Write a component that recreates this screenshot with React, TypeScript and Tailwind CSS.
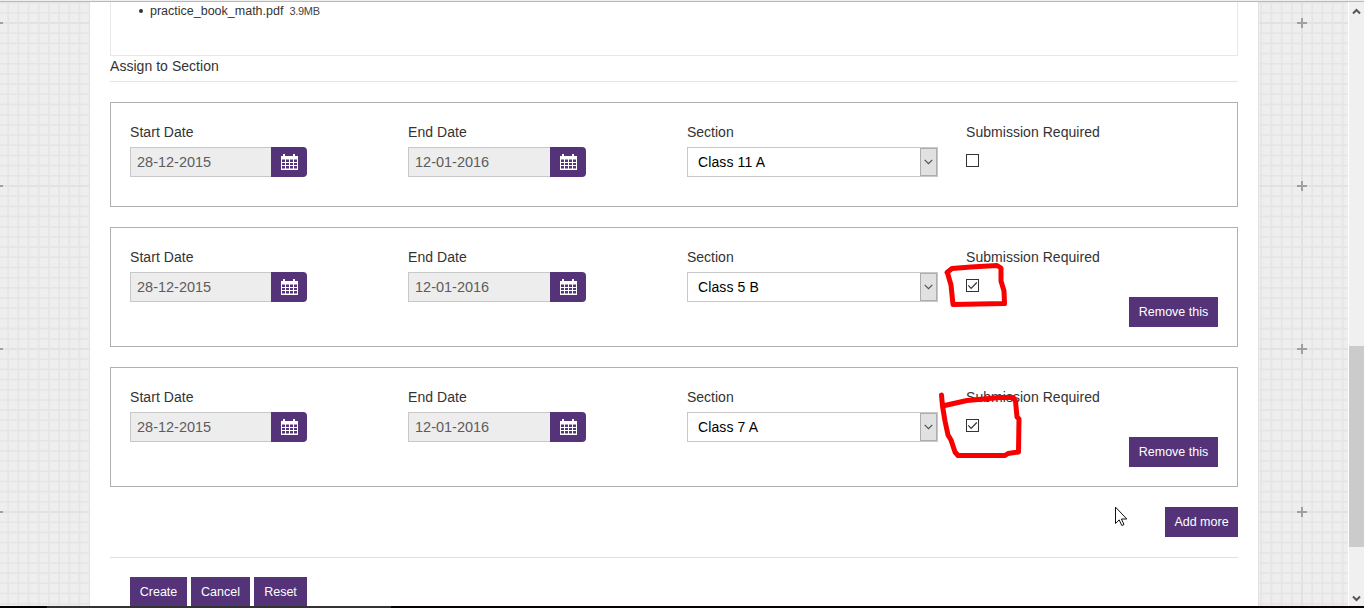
import React from "react";

const period = 163;
const step = period / 16;

function GridBackground() {
  return (
    <svg className="absolute inset-0 h-[608px] w-[1364px]" aria-hidden="true">
      <defs>
        <pattern id="grid" x="-84" y="-59" width={period} height={period} patternUnits="userSpaceOnUse">
          <rect width={period} height={period} fill="#eeeeee" />
          {Array.from({ length: 17 }, (_, i) => {
            const p = 82 + (i - 8) * step;
            const c = i === 8 ? "#dfdfdf" : "#e5e5e5";
            return (
              <g key={i} stroke={c} strokeWidth="1.6">
                <path d={`M${p} 0V163`} />
                <path d={`M0 ${p}H163`} />
              </g>
            );
          })}
          <path d="M77 82h10M82 77v10" stroke="#a0a0a0" strokeWidth="2" />
        </pattern>
      </defs>
      <rect width="1364" height="608" fill="url(#grid)" />
    </svg>
  );
}

function CalendarIcon() {
  return (
    <svg width="17" height="16" viewBox="0 0 17 16" className="block" aria-hidden="true">
      <path d="M2 0h2v2h8V0h2v2h3v3H0V2h2z" fill="#fff" />
      <path
        fillRule="evenodd"
        d="M0 4h17v12H0zM1 5.500v2.500h3V5.500zM5 5.500v2.500h3V5.500zM9 5.500v2.500h3V5.500zM13 5.500v2.500h3V5.500zM1 9v2h3V9zM5 9v2h3V9zM9 9v2h3V9zM13 9v2h3V9zM1 12v2.500h3V12zM5 12v2.500h3V12zM9 12v2.500h3V12zM13 12v2.500h3V12z"
        fill="#fff"
      />
    </svg>
  );
}

function DateField({ label, value, width, inputWidth }: { label: string; value: string; width: string; inputWidth: string }) {
  return (
    <div className={width}>
      <div className="h-5 text-sm leading-5 tracking-[0.06px]">{label}</div>
      <div className="mt-[5px] flex h-[30px]">
        <div
          className={`h-[30px] border border-r-0 border-[#c8c8c8] bg-[#ededed] pl-1.5 text-[14.5px] leading-[28px] text-[#5c5c5c] ${inputWidth}`}
        >
          {value}
        </div>
        <button className="flex h-[30px] w-9 items-center rounded-r-[4px] bg-[#543378] pl-2.5">
          <CalendarIcon />
        </button>
      </div>
    </div>
  );
}

function SectionSelect({ value }: { value: string }) {
  return (
    <div className="w-[279px]">
      <div className="h-5 text-sm leading-5">Section</div>
      <div className="mt-[5px] flex h-[30px] w-[251px] justify-between border border-[#c8c8c8] bg-white">
        <span className="pl-2.5 text-sm leading-[28px] tracking-[0.12px] text-black">{value}</span>
        <span className="flex h-[28px] w-[17px] items-center justify-center border border-[#adadad] bg-[#e1e1e1]">
          <svg width="9" height="6" viewBox="0 0 9 6" fill="none" stroke="#505050" strokeWidth="1.2">
            <path d="M.7.8 4.5 4.6 8.3.8" />
          </svg>
        </span>
      </div>
    </div>
  );
}

function Checkbox({ checked }: { checked: boolean }) {
  return (
    <span className="mt-3 block h-[13px] w-[13px] border border-[#333] bg-white">
      {checked && (
        <svg width="11" height="11" viewBox="0 0 11 11" fill="none" stroke="#333" strokeWidth="1.2">
          <path d="M1.3 5.4 4.1 8.3 9.8 2.5" />
        </svg>
      )}
    </span>
  );
}

function Btn({ children, size }: { children: React.ReactNode; size: string }) {
  return (
    <button className={`h-[30px] bg-[#543378] text-center text-[12.5px] leading-[30px] whitespace-nowrap text-white ${size}`}>
      {children}
    </button>
  );
}

function AssignCard({ section, checked, removable }: { section: string; checked: boolean; removable: boolean }) {
  return (
    <div
      className={`mb-5 flex flex-col border border-[#b0b0b0] px-[19px] pt-[19px] ${removable ? "h-[120px]" : "h-[105px]"}`}
    >
      <div className="flex h-[50px]">
        <DateField label="Start Date" value="28-12-2015" width="w-[278px]" inputWidth="w-[141px]" />
        <DateField label="End Date" value="12-01-2016" width="w-[279px]" inputWidth="w-[142px]" />
        <SectionSelect value={section} />
        <div>
          <div className="h-5 text-sm leading-5 tracking-[0.04px]">Submission Required</div>
          <Checkbox checked={checked} />
        </div>
      </div>
      {removable && (
        <div className="flex justify-end">
          <Btn size="w-[89px]">Remove this</Btn>
        </div>
      )}
    </div>
  );
}

function Annotations() {
  return (
    <svg
      className="pointer-events-none absolute inset-0 h-[608px] w-[1364px]"
      fill="none"
      stroke="#f80000"
      strokeLinecap="round"
      strokeLinejoin="round"
      aria-hidden="true"
    >
      <path strokeWidth="5" d="M947 272.5 952 268.500 971 267 997 265.500 1001 268 1001 281 1004 291 1004.500 303.500 953 304.500 951 285 947.500 273" />
      <path strokeWidth="5" d="M941.500 395 942.500 406 967 400.500 1000 397.500 1013 397.500 1015.500 401 1017 417 1019 419 1018.500 452 1008 453.500 1005 455.500 958 455.500 955 452 951 440 948 435 945 421 942.500 406" />
      <path
        d="M1115.500 507.500v16l3.700-3.600 2.600 5.600 2.200-1-2.600-5.500h5z"
        fill="#fff"
        stroke="#111"
        strokeWidth="1"
        strokeLinejoin="miter"
      />
    </svg>
  );
}

function Scrollbar() {
  return (
    <div className="flex w-4 flex-col border-l border-white bg-[#f0f0f0]">
      <div className="flex h-[344px] justify-center pt-1.5">
        <svg width="9" height="7" viewBox="0 0 9 7" fill="none" stroke="#555" strokeWidth="2">
          <path d="M1 5.500 4.500 2 8 5.500" />
        </svg>
      </div>
      <div className="h-[201px] bg-[#cbcbcb]" />
      <div className="flex grow items-end justify-center pb-1">
        <svg width="9" height="7" viewBox="0 0 9 7" fill="none" stroke="#555" strokeWidth="2">
          <path d="M1 1.500 4.500 5 8 1.500" />
        </svg>
      </div>
    </div>
  );
}

export default function App() {
  return (
    <div className="relative flex h-[608px] w-[1364px] flex-col overflow-hidden font-['Liberation_Sans',Arial,sans-serif] text-[#333]">
      <GridBackground />
      <div className="relative h-0.5 shrink-0 border-b border-[#b9b9b9] bg-[#eeeeee]" />
      <div className="relative flex h-[604px] shrink-0 justify-between">
        <div className="w-[90px] border-r border-[#e2e2e2]" />
        <main className="h-[604px] w-[1168px] overflow-hidden bg-white px-5">
          <div className="h-[54px] border border-t-0 border-[#e8e8e8] pl-7">
            <div className="flex h-[18px] items-center text-[12.5px] leading-[18px]">
              <span className="mr-[7px] h-1 w-1 rounded-full bg-[#333]" />
              <span>practice_book_math.pdf</span>
              <span className="ml-1.5 text-[11px] tracking-[-0.3px] text-[#444]">3.9MB</span>
            </div>
          </div>
          <h2 className="mb-5 h-[26px] border-b border-[#e5e5e5] text-sm leading-[20px] tracking-[0.04px]">Assign to Section</h2>
          <AssignCard section="Class 11 A" checked={false} removable={false} />
          <AssignCard section="Class 5 B" checked removable />
          <AssignCard section="Class 7 A" checked removable />
          <div className="flex h-[51px] justify-end border-b border-[#e0e0e0]">
            <Btn size="w-[73px]">Add more</Btn>
          </div>
          <div className="mt-[19px] flex gap-1 pl-5">
            <Btn size="w-[57px]">Create</Btn>
            <Btn size="w-[59px]">Cancel</Btn>
            <Btn size="w-[53px]">Reset</Btn>
          </div>
        </main>
        <div className="flex w-[106px] justify-end border-l border-[#e2e2e2]">
          <Scrollbar />
        </div>
      </div>
      <div className="relative flex h-0.5 shrink-0 bg-[#080006]">
        <div className="h-0.5 w-[47px] bg-black" />
        <div className="h-0.5 w-[344px] bg-[#333]" />
      </div>
      <Annotations />
    </div>
  );
}
